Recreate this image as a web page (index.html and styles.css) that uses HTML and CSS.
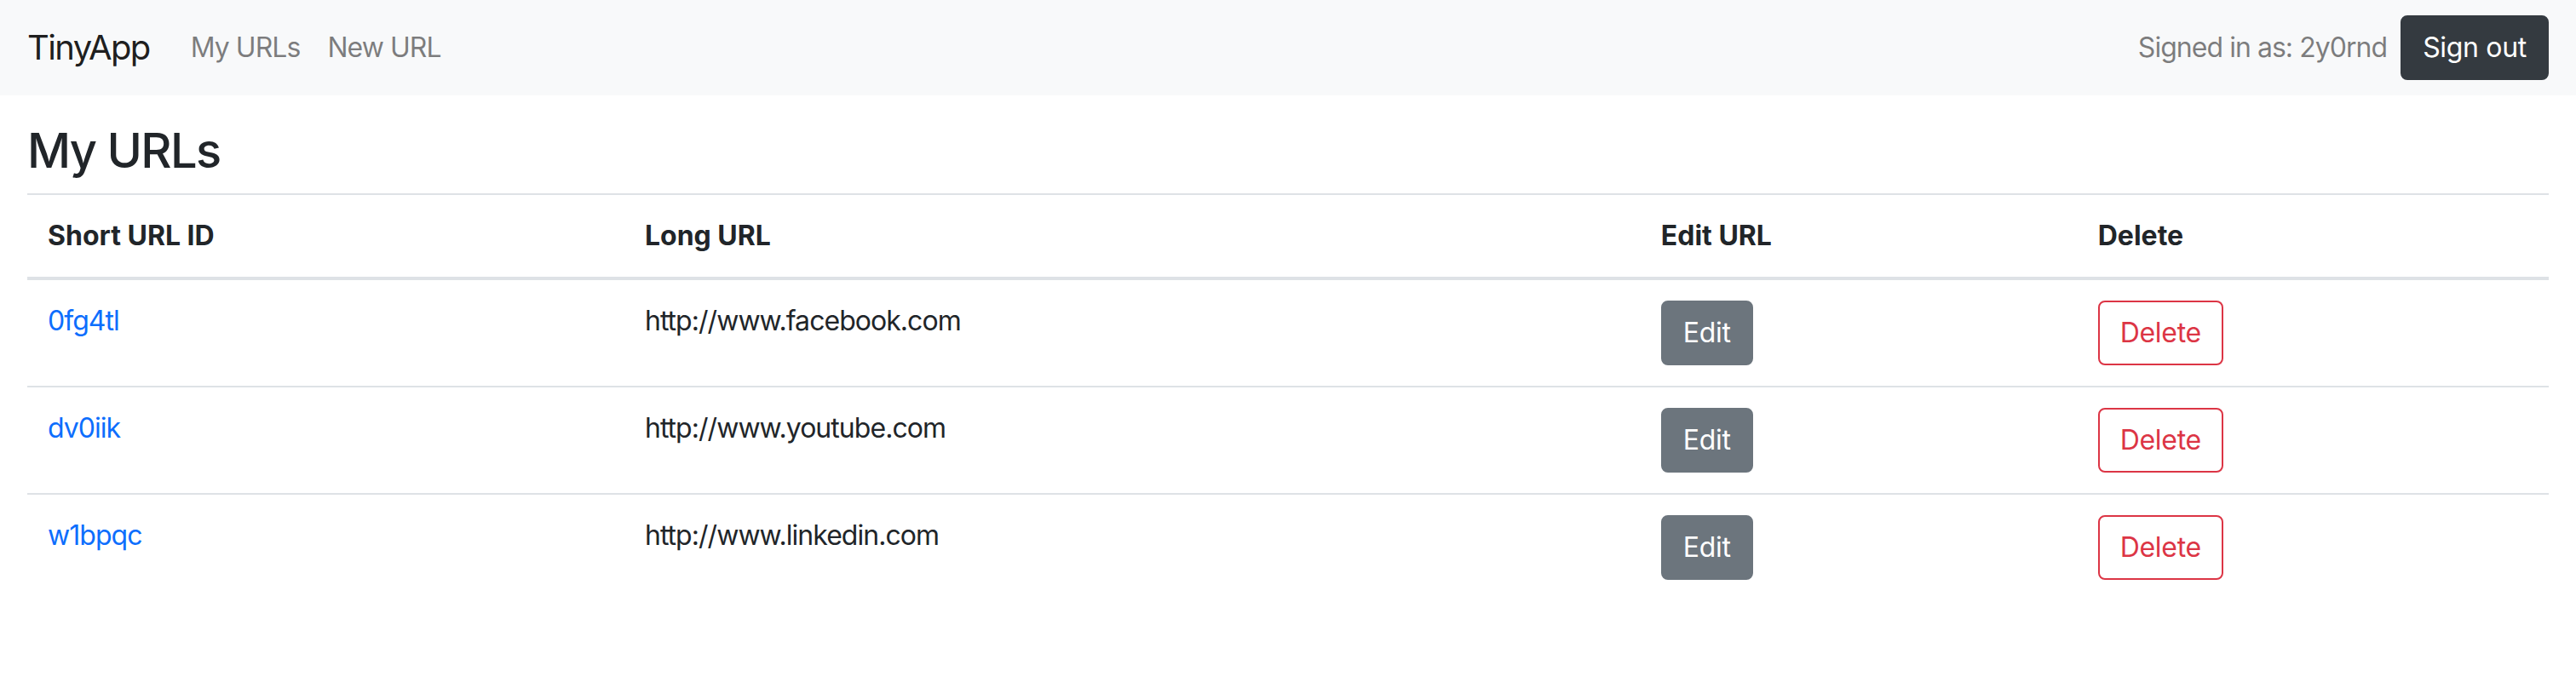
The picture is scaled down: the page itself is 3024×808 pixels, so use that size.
FILE: index.html
```html
<!DOCTYPE html>
<html lang="en">
<head>
<meta charset="utf-8">
<title>TinyApp</title>
<link rel="stylesheet" href="styles.css">
</head>
<body>
<nav class="navbar">
  <a class="brand" href="#">TinyApp</a>
  <ul class="nav">
    <li><a class="nav-link" href="#">My URLs</a></li>
    <li><a class="nav-link" href="#">New URL</a></li>
  </ul>
  <div class="user">
    <span class="navbar-text">Signed in as: 2y0rnd</span>
    <button class="btn btn-dark" type="button">Sign out</button>
  </div>
</nav>
<main class="container">
  <h3 class="title">My URLs</h3>
  <table class="table">
    <colgroup>
      <col class="col-id">
      <col class="col-long">
      <col class="col-edit">
      <col class="col-delete">
    </colgroup>
    <thead>
      <tr>
        <th>Short URL ID</th>
        <th>Long URL</th>
        <th>Edit URL</th>
        <th>Delete</th>
      </tr>
    </thead>
    <tbody>
      <tr>
        <td><a class="link" href="#">0fg4tl</a></td>
        <td>http://www.facebook.com</td>
        <td><button class="btn btn-secondary" type="button">Edit</button></td>
        <td><button class="btn btn-outline-danger" type="button">Delete</button></td>
      </tr>
      <tr>
        <td><a class="link" href="#">dv0iik</a></td>
        <td>http://www.youtube.com</td>
        <td><button class="btn btn-secondary" type="button">Edit</button></td>
        <td><button class="btn btn-outline-danger" type="button">Delete</button></td>
      </tr>
      <tr>
        <td><a class="link" href="#">w1bpqc</a></td>
        <td>http://www.linkedin.com</td>
        <td><button class="btn btn-secondary" type="button">Edit</button></td>
        <td><button class="btn btn-outline-danger" type="button">Delete</button></td>
      </tr>
    </tbody>
  </table>
</main>
</body>
</html>
```
FILE: styles.css
```css
* { box-sizing: border-box; }

html, body {
  margin: 0;
  padding: 0;
}

body {
  font-family: Inter, "Liberation Sans", Arial, sans-serif;
  font-size: 32px;
  line-height: 1.5;
  letter-spacing: -0.03em;
  color: #212529;
  background: #fff;
}

a { text-decoration: none; }

/* Navbar */
.navbar {
  display: flex;
  align-items: center;
  padding: 16px 32px;
  background: #f8f9fa;
}

.brand {
  font-size: 40px;
  line-height: 1.5;
  letter-spacing: -0.04em;
  padding: 10px 0;
  margin-right: 32px;
  color: rgba(0, 0, 0, 0.9);
  white-space: nowrap;
}

.nav {
  display: flex;
  list-style: none;
  margin: 0 auto 0 0;
  padding: 0;
}

.nav-link {
  display: block;
  padding: 16px;
  color: rgba(0, 0, 0, 0.5);
}

.user {
  display: flex;
  align-items: center;
}

.navbar-text {
  padding: 16px 0;
  margin-right: 16px;
  color: rgba(0, 0, 0, 0.5);
}

/* Buttons */
.btn {
  display: inline-block;
  font-family: inherit;
  font-size: 32px;
  line-height: 48px;
  font-weight: 400;
  letter-spacing: -0.01em;
  padding: 12px 24px;
  border: 2px solid transparent;
  border-radius: 8px;
  cursor: pointer;
  vertical-align: middle;
  text-align: center;
}

.btn-dark {
  background: #343a40;
  border-color: #343a40;
  color: #fff;
}

.btn-secondary {
  background: #6c757d;
  border-color: #6c757d;
  color: #fff;
}

.btn-outline-danger {
  background: transparent;
  border-color: #dc3545;
  color: #dc3545;
}

/* Content */
.container {
  padding: 0 32px;
}

.title {
  font-size: 56px;
  font-weight: 500;
  line-height: 1.2;
  letter-spacing: -0.03em;
  margin: 32px 0 16px;
}

.table {
  width: 100%;
  table-layout: fixed;
  border-collapse: collapse;
  margin-bottom: 32px;
  color: #212529;
}

.col-id { width: 23.68%; }
.col-long { width: 40.30%; }
.col-edit { width: 17.33%; }
.col-delete { width: 18.69%; }

.table th,
.table td {
  padding: 24px;
  vertical-align: top;
  border-top: 2px solid #dee2e6;
  text-align: left;
}

.table thead th {
  font-weight: 700;
  letter-spacing: 0;
  vertical-align: bottom;
  border-bottom: 4px solid #dee2e6;
}

.link {
  color: #0d6efd;
}
```
